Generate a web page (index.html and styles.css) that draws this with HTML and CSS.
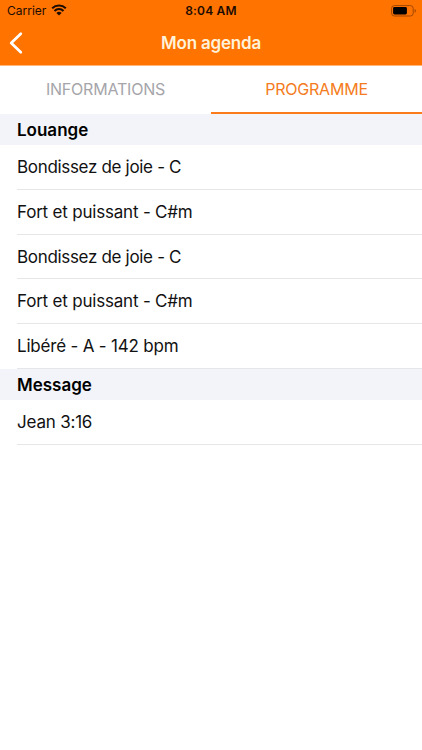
FILE: index.html
```
<!DOCTYPE html>
<html lang="fr">
<head>
    <meta charset="UTF-8">
    <meta name="viewport" content="width=device-width, initial-scale=1.0">
    <title>Mon agenda</title>
    <link rel="stylesheet" href="styles.css">
</head>
<body>
    <!-- En-tête -->
    <header class="header">
        <div class="status-bar">
            <div class="carrier">
                <span class="carrier-name">Carrier</span>
                <svg class="wifi" width="16" height="12" viewBox="0 0 16 12">
                    <path d="M1.2 4.3a9.8 9.8 0 0 1 13.6 0M3.5 6.9a6.4 6.4 0 0 1 9 0" fill="none" stroke="#1c0c00" stroke-width="2.1"/>
                    <path d="M5.4 8.9a3.8 3.8 0 0 1 5.2 0L8 11.6z" fill="#1c0c00"/>
                </svg>
            </div>
            <div class="clock">8:04 AM</div>
            <svg class="battery" width="26" height="12" viewBox="0 0 26 12">
                <rect x="0.6" y="0.6" width="21.6" height="10.4" rx="2.8" fill="none" stroke="#a34800"/>
                <rect x="2.1" y="2.1" width="13.8" height="7.4" rx="1.4" fill="#000"/>
                <path d="M23.6 4v3.8c.9-.4 1.3-1.1 1.3-1.9s-.4-1.5-1.3-1.9z" fill="#a34800"/>
            </svg>
        </div>
        <nav class="nav-bar">
            <button class="back" aria-label="Retour">
                <svg width="14" height="24" viewBox="0 0 14 24">
                    <path d="M11.8 2.7L2.2 12l9.6 9.3" fill="none" stroke="#fff" stroke-width="2.7" stroke-linecap="round" stroke-linejoin="round"/>
                </svg>
            </button>
            <h1 class="title">Mon agenda</h1>
        </nav>
    </header>

    <!-- Onglets -->
    <div class="tabs">
        <button class="tab">INFORMATIONS</button>
        <button class="tab active">PROGRAMME</button>
    </div>

    <!-- Programme -->
    <main>
        <h2 class="section">Louange</h2>
        <ul class="list">
            <li class="tight">Bondissez de joie - C</li>
            <li>Fort et puissant - C#m</li>
            <li class="tight">Bondissez de joie - C</li>
            <li>Fort et puissant - C#m</li>
            <li>Libéré - A - 142 bpm</li>
        </ul>
        <h2 class="section">Message</h2>
        <ul class="list">
            <li>Jean 3:16</li>
        </ul>
    </main>
</body>
</html>
```
FILE: styles.css
```
* {
    box-sizing: border-box;
}

body {
    margin: 0;
    min-height: 100vh;
    background-color: #fff;
    color: #111;
    font-family: Inter, "Liberation Sans", sans-serif;
}

button {
    padding: 0;
    border: none;
    background: none;
    font-family: inherit;
}

.header {
    height: 66px;
    background-color: #ff7300;
    border-bottom: 1px solid #ffb67c;
}

.status-bar {
    display: grid;
    grid-template-columns: 1fr auto 1fr;
    align-items: center;
    height: 21px;
    padding: 0 5px 0 7px;
    font-size: 12px;
    color: #1c0c00;
}

.carrier {
    display: flex;
    align-items: center;
    gap: 5px;
}

.wifi {
    margin-top: -1px;
}

.clock {
    margin-right: 2px;
    font-weight: 600;
    letter-spacing: 0.2px;
}

.battery {
    justify-self: end;
}

/* Barre de navigation */
.nav-bar {
    display: grid;
    grid-template-columns: 40px 1fr 40px;
    align-items: center;
    height: 43px;
}

.back {
    height: 24px;
    padding-left: 9px;
    text-align: left;
}

.back svg {
    display: block;
}

.title {
    margin: 0;
    font-size: 17px;
    font-weight: 600;
    letter-spacing: -0.2px;
    text-align: center;
    color: #fff2d9;
}

.tabs {
    display: flex;
    height: 48px;
}

.tab {
    flex: 1;
    border-bottom: 2px solid transparent;
    font-size: 16px;
    letter-spacing: -0.2px;
    color: #a5a5aa;
}

.tab.active {
    border-bottom-color: #fb7a1c;
    color: #f47b20;
}

/* Liste */
.section {
    height: 31px;
    margin: 0;
    padding-left: 17px;
    background-color: #f3f4f9;
    font-size: 17px;
    font-weight: 600;
    line-height: 32px;
    color: #000;
}

.list {
    margin: 0;
    padding: 0 0 0 17px;
    list-style: none;
}

.list li {
    height: 44.8px;
    border-bottom: 1px solid #e6e6e8;
    font-size: 17px;
    line-height: 45px;
    letter-spacing: -0.2px;
}

.list .tight {
    letter-spacing: -0.32px;
}
```
